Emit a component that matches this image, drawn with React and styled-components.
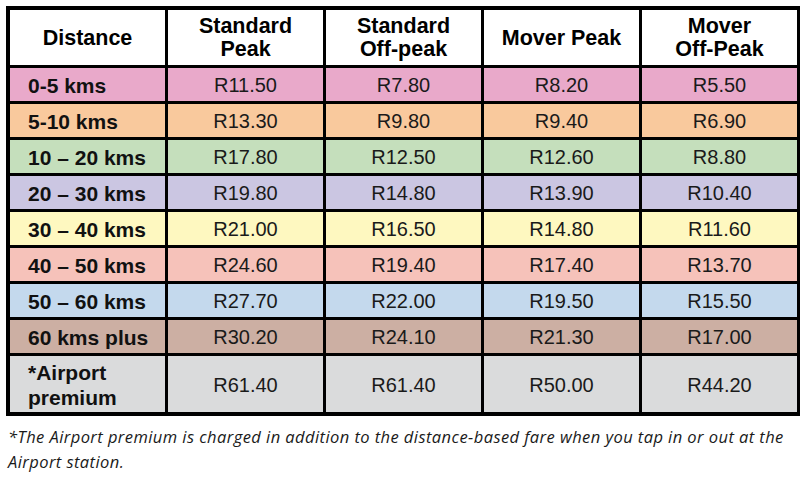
import React from 'react'
import styled, { createGlobalStyle } from 'styled-components'

const GlobalStyle = createGlobalStyle`
  body {
    margin: 0;
    background: #ffffff;
    font-family: "Liberation Sans", Arial, sans-serif;
    color: #1a1a1a;
  }
`

const Page = styled.div`
  width: 808px;
  height: 480px;
  padding: 6px 0 0 6px;
  box-sizing: border-box;
`

const Table = styled.div`
  display: grid;
  grid-template-columns: repeat(5, 155px);
  grid-template-rows: 55px repeat(8, 33px) 56px;
  gap: 3px;
  width: max-content;
  background: #000;
  border: 4px solid #000;
  border-right-width: 3px;
`

const HeadCell = styled.div`
  background: #fff;
  display: flex;
  align-items: center;
  justify-content: center;
  text-align: center;
  padding-top: 1px;
  font-weight: 700;
  font-size: 21.5px;
  line-height: 23px;
  color: #000;
`

const DistCell = styled.div`
  background: ${p => p.bg};
  display: flex;
  align-items: center;
  padding: 2px 0 0 18px;
  font-weight: 700;
  font-size: 21px;
  line-height: 25px;
  color: #111;
`

const PriceCell = styled.div`
  background: ${p => p.bg};
  display: flex;
  align-items: center;
  justify-content: center;
  padding-top: 2px;
  font-size: 20px;
  color: #1a1a1a;
`

const Note = styled.p`
  margin: 8px 0 0 2px;
  width: 792px;
  font-family: "Open Sans", "Liberation Sans", sans-serif;
  font-style: italic;
  font-size: 16.5px;
  letter-spacing: 0.43px;
  line-height: 25px;
  color: #1a1a1a;
`

const headers = [
  ['Distance'],
  ['Standard', 'Peak'],
  ['Standard', 'Off-peak'],
  ['Mover Peak'],
  ['Mover', 'Off-Peak'],
]

const rows = [
  { bg: '#e9a9ca', label: ['0-5 kms'], prices: ['R11.50', 'R7.80', 'R8.20', 'R5.50'] },
  { bg: '#f9c99d', label: ['5-10 kms'], prices: ['R13.30', 'R9.80', 'R9.40', 'R6.90'] },
  { bg: '#c5dfbc', label: ['10 – 20 kms'], prices: ['R17.80', 'R12.50', 'R12.60', 'R8.80'] },
  { bg: '#cbc6e2', label: ['20 – 30 kms'], prices: ['R19.80', 'R14.80', 'R13.90', 'R10.40'] },
  { bg: '#fef8c0', label: ['30 – 40 kms'], prices: ['R21.00', 'R16.50', 'R14.80', 'R11.60'] },
  { bg: '#f6c2ba', label: ['40 – 50 kms'], prices: ['R24.60', 'R19.40', 'R17.40', 'R13.70'] },
  { bg: '#c4d9ed', label: ['50 – 60 kms'], prices: ['R27.70', 'R22.00', 'R19.50', 'R15.50'] },
  { bg: '#ccafa3', label: ['60 kms plus'], prices: ['R30.20', 'R24.10', 'R21.30', 'R17.00'] },
  { bg: '#dadbdc', label: ['*Airport', 'premium'], prices: ['R61.40', 'R61.40', 'R50.00', 'R44.20'] },
]

const lines = parts => parts.map((t, i) => (
  <React.Fragment key={i}>
    {i > 0 && <br />}
    {t}
  </React.Fragment>
))

export default function App() {
  return (
    <Page>
      <GlobalStyle />
      <Table>
        {headers.map((h, i) => (
          <HeadCell key={i}>
            <span>{lines(h)}</span>
          </HeadCell>
        ))}
        {rows.map((r, i) => (
          <React.Fragment key={i}>
            <DistCell bg={r.bg}>
              <span>{lines(r.label)}</span>
            </DistCell>
            {r.prices.map((p, j) => (
              <PriceCell key={j} bg={r.bg}>{p}</PriceCell>
            ))}
          </React.Fragment>
        ))}
      </Table>
      <Note>
        *The Airport premium is charged in addition to the distance-based fare when you tap in or out at the Airport station.
      </Note>
    </Page>
  )
}
